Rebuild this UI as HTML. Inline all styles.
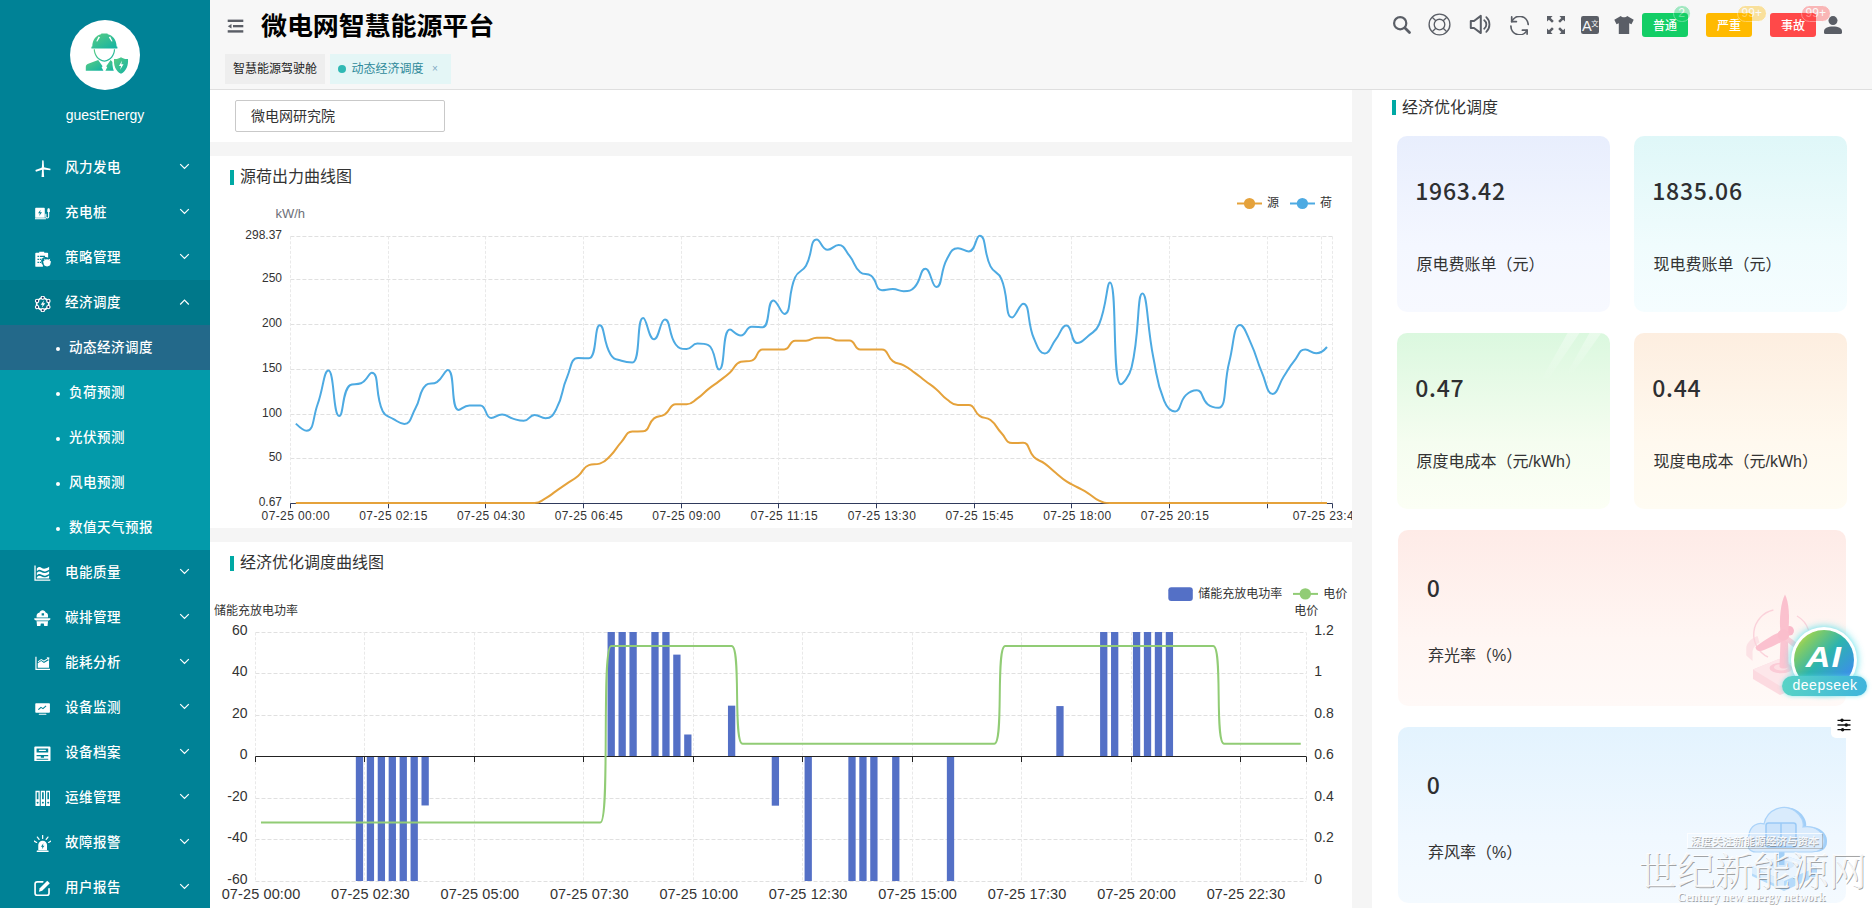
<!DOCTYPE html>
<html lang="zh-CN">
<head>
<meta charset="utf-8">
<title>微电网智慧能源平台</title>
<style>
html,body{margin:0;padding:0;}
body{width:1872px;height:908px;overflow:hidden;background:#f5f5f5;font-family:"Liberation Sans","Noto Sans CJK SC",sans-serif;color:#333;}
#app{position:relative;width:1872px;height:908px;overflow:hidden;}
.abs{position:absolute;}
svg{display:block;}
/* sidebar */
.sidebar{position:absolute;left:0;top:0;width:210px;height:908px;background:#008296;color:#fff;}
.avatar{position:absolute;left:70px;top:20px;width:70px;height:70px;border-radius:50%;background:#fff;}
.uname{position:absolute;left:0;width:210px;top:107px;text-align:center;font-size:14px;line-height:16px;color:#fff;}
.mi{position:absolute;left:0;width:210px;height:45px;line-height:45px;font-size:13.5px;letter-spacing:.5px;font-weight:500;color:#fff;}
.mi .ic{position:absolute;left:34px;top:14px;width:17px;height:17px;}
.mi .tx{position:absolute;left:65px;top:.2px;white-space:nowrap;}
.mi .ar{position:absolute;left:179px;top:16px;width:11px;height:11px;}
.mi.open{background:#00788a;}
.sub{position:absolute;left:0;width:210px;height:45px;line-height:45px;font-size:13.5px;letter-spacing:.5px;font-weight:500;color:#fff;background:#039aaa;}
.sub.act{background:#23698a;}
.sub .dot{position:absolute;left:56px;top:21.5px;width:4px;height:4px;border-radius:50%;background:#fff;}
.sub .tx{position:absolute;left:69px;top:.2px;white-space:nowrap;}
/* header */
.header{position:absolute;left:210px;top:0;width:1662px;height:89px;background:#f7f7f7;border-bottom:1px solid #dfdfdf;}
.title{position:absolute;left:51px;top:8px;font-size:26px;line-height:36px;font-weight:bold;color:#000;white-space:nowrap;letter-spacing:-0.1px;transform:scaleY(.965);transform-origin:0 31px;}
.tab{position:absolute;top:54px;height:30px;line-height:30px;font-size:12px;white-space:nowrap;}
.tab1{left:15px;width:100px;background:#eeeeee;color:#1f1f1f;}
.tab1 span{position:absolute;left:8px;}
.tab2{left:120px;width:121px;background:#e4f6f6;color:#2f8a9a;}
.tab2 .d{position:absolute;left:8px;top:11px;width:8px;height:8px;border-radius:50%;background:#2fb9b4;}
.tab2 .t{position:absolute;left:21.5px;}
.tab2 .x{position:absolute;left:102px;top:0;font-size:10px;color:#7fa9c2;}
.hic{position:absolute;}
.btn{position:absolute;top:13px;width:46px;height:24px;line-height:24px;border-radius:3px;color:#fff;font-size:12px;text-align:center;font-weight:500;font-family:"Noto Sans CJK SC",sans-serif;}
.bdg{position:absolute;top:4.5px;height:15px;line-height:15px;border-radius:9px;border:1px solid #fff;color:#fff;font-size:12px;text-align:center;opacity:.37;}
/* cards */
.filter-card{position:absolute;left:210px;top:90px;width:1142px;height:52px;background:#fff;}
.inp{position:absolute;left:25px;top:10px;width:208px;height:30px;border:1px solid #c9c9c9;border-radius:2px;line-height:30px;font-size:14px;color:#333;padding-left:0;text-indent:15px;background:#fff;}
.card{position:absolute;left:210px;width:1142px;background:#fff;overflow:hidden;}
.ct{position:absolute;font-size:16px;line-height:20px;color:#333;white-space:nowrap;}
.ct:before{content:"";position:absolute;left:-10px;top:2.5px;width:4px;height:15px;background:#00a9a4;}
.right{position:absolute;left:1372px;top:90px;width:500px;height:818px;background:#fff;overflow:hidden;}
.st{position:absolute;border-radius:10px;overflow:hidden;}
.st .num{position:absolute;font-family:"Noto Sans CJK SC","Liberation Sans",sans-serif;font-weight:500;font-size:23px;letter-spacing:.7px;line-height:30px;color:#2e2f31;white-space:nowrap;}
.st .lab{position:absolute;font-size:16px;line-height:22px;color:#333;white-space:nowrap;}

</style>
</head>
<body>
<div id="app">
<div class="sidebar">
<div class="avatar"><svg viewBox="0 0 70 70" width="70" height="70"><defs><linearGradient id="avg" x1="0" y1="0" x2="1" y2="1"><stop offset="0" stop-color="#5bcd83"/><stop offset="1" stop-color="#12b2a4"/></linearGradient></defs>
<g fill="url(#avg)">
<path d="M22.300 26.600 C22.300 19.500 26.500 15.200 31 14.300 L31.400 13.400 H37.400 L37.800 14.300 C42.300 15.200 46.600 19.500 46.600 26.600 L47.400 26.800 V28.500 H21.400 V26.800Z M28.600 16.600 L26.300 21.200 L27.300 21.600 L30 17.200Z M40.200 16.600 L42.500 21.200 L41.500 21.600 L38.800 17.200Z" fill-rule="evenodd"/>
<path d="M23.700 29.300 H24.900 C25 34.500 28.300 39.600 34.400 40.600 C40.500 39.600 43.800 34.500 43.900 29.300 H45.100 C45 35.300 41.200 40.800 34.400 41.800 C27.600 40.800 23.800 35.300 23.700 29.300Z"/>
<path d="M28.200 40.100 L32.600 46.300 L31.600 47.300 L33.400 50.800 H15.800 V47 C15.800 45.300 16.700 44.300 18.200 43.800Z"/>
<path d="M40.600 40.100 L36.200 46.300 L37.200 47.300 L35.400 50.800 H43.800 C42.700 48 42.400 45 42.800 42.200Z"/>
<path d="M32.900 48.300 H35.900 V49.300 H32.900Z" fill="#fff"/>
<path d="M51 37.200 C53.300 38.800 55.500 39.200 58 38.900 C58.500 45 56.400 51 51 53.700 C45.600 51 43.500 45 44 38.900 C46.500 39.200 48.700 38.800 51 37.200Z M52 40.700 L49 46 H51 L50.200 49.800 L53.500 44.300 H51.300Z" fill-rule="evenodd"/>
</g>
<path d="M43.300 37.800 C42.300 43 43.300 48.500 46.600 52.300" fill="none" stroke="#fff" stroke-width="0.900"/>
</svg></div>
<div class="uname">guestEnergy</div>
<div class="mi" style="top:145px"><div class="ic" style="left:34.5px;top:14.6px;width:16px;height:17.2px"><svg viewBox="0 0 17 17" width="16" height="17.2" preserveAspectRatio="none"><g fill="#fff"><path d="M7.700 0.200 L9.100 0.500 L9.600 7.200 L7.300 7.300Z"/><path d="M9.300 7.100 L16.500 8.600 L16.300 10.200 L8.900 9.300Z"/><path d="M7.800 7.300 L0.400 10 L1.000 11.500 L8.400 9.300Z"/><path d="M7.500 9.200 L9.200 9.200 L9.700 17 L7.000 17Z"/><circle cx="8.400" cy="8.200" r="1.500"/></g></svg></div><div class="tx">风力发电</div><div class="ar"><svg viewBox="0 0 11 11" width="11" height="11"><path d="M1.200 3.200 L5.500 7.500 L9.800 3.200" fill="none" stroke="#fff" stroke-width="1.200"/></svg></div></div>
<div class="mi" style="top:190px"><div class="ic" style="left:34.5px;top:16.2px;width:16px;height:14.2px"><svg viewBox="0 0 17 17" width="16" height="14.2" preserveAspectRatio="none"><g fill="#fff"><path d="M1 2.2 h8.6 a0.8 0.8 0 0 1 .8 .8 v11 h-10.2 v-11 a.8 .8 0 0 1 .8 -.8z M5.9 4.4 L3.3 8.7 h1.9 l-.7 3.3 2.9 -4.5 h-2z" fill-rule="evenodd"/><rect x="0" y="14.6" width="11.6" height="1.3"/><path d="M11 9.2 h1.1 v3.6 a.9 .9 0 0 0 1.8 0 V7.2 h-.8 V4.6 l.6 -1.9 h1.5 l.6 1.9 v2.6 h-.7 v5.6 a2.1 2.1 0 0 1 -4.200 0z"/></g></svg></div><div class="tx">充电桩</div><div class="ar"><svg viewBox="0 0 11 11" width="11" height="11"><path d="M1.200 3.200 L5.500 7.500 L9.800 3.200" fill="none" stroke="#fff" stroke-width="1.200"/></svg></div></div>
<div class="mi" style="top:235px"><div class="ic" style="left:34.5px;top:15.7px;width:16.3px;height:16.5px"><svg viewBox="0 0 17 17" width="16.3" height="16.5" preserveAspectRatio="none"><g fill="#fff"><path d="M1.2 1.8 h3.2 v-.9 h5.200 v.9 h3.2 a.9 .9 0 0 1 .9 .9 v4.300 a4.600 4.600 0 0 0 -5.500 7.4 v1.9 h-7.0 a.9 .9 0 0 1 -.9 -.9 v-12.7 a.9 .9 0 0 1 .9 -.9z M2.6 5 v1.3 h1.5 v-1.3z M5 5 v1.3 h5.500 v-1.300z M2.600 8 v1.3 h1.5 v-1.3z M5 8 v1.300 h2.400 v-1.3z M2.600 11 v1.3 h1.500 v-1.300z M5 11 v1.3 h2 v-1.300z" fill-rule="evenodd"/><circle cx="12.600" cy="12.200" r="3.700"/><path d="M9.600 8.300 l1.500 1.400 M15.700 8.300 l-1.500 1.400 M8.300 11.200 h1.500 M16.900 11.200 h-1.500" stroke="#fff" stroke-width="1" fill="none"/></g></svg></div><div class="tx">策略管理</div><div class="ar"><svg viewBox="0 0 11 11" width="11" height="11"><path d="M1.200 3.200 L5.500 7.500 L9.800 3.200" fill="none" stroke="#fff" stroke-width="1.200"/></svg></div></div>
<div class="mi open" style="top:280px"><div class="ic" style="left:34px;top:15.5px;width:17.5px;height:16px"><svg viewBox="0 0 18 17" width="17.5" height="16" preserveAspectRatio="none"><g><circle cx="9" cy="8.500" r="6.300" fill="none" stroke="#fff" stroke-width="1.800"/><g fill="#1f2a5a" stroke="#fff" stroke-width="1.200"><circle cx="9" cy="1.900" r="1.700"/><circle cx="9" cy="15.100" r="1.700"/><circle cx="3.200" cy="5.200" r="1.700"/><circle cx="14.800" cy="5.200" r="1.700"/><circle cx="3.200" cy="11.800" r="1.700"/><circle cx="14.800" cy="11.800" r="1.700"/></g><path d="M10.300 4.600 L6.900 9.200 h2 l-.9 3.400 3.600 -4.800 h-2.100z" fill="#fff"/></g></svg></div><div class="tx">经济调度</div><div class="ar" style="top:17.3px"><svg viewBox="0 0 11 11" width="11" height="11"><path d="M1.200 7.500 L5.500 3.200 L9.800 7.500" fill="none" stroke="#fff" stroke-width="1.200"/></svg></div></div>
<div class="sub act" style="top:325px"><div class="dot"></div><div class="tx">动态经济调度</div></div>
<div class="sub" style="top:370px"><div class="dot"></div><div class="tx">负荷预测</div></div>
<div class="sub" style="top:415px"><div class="dot"></div><div class="tx">光伏预测</div></div>
<div class="sub" style="top:460px"><div class="dot"></div><div class="tx">风电预测</div></div>
<div class="sub" style="top:505px"><div class="dot"></div><div class="tx">数值天气预报</div></div>
<div class="mi" style="top:550px"><div class="ic" style="left:34.2px;top:15px;width:16.6px;height:16.3px"><svg viewBox="0 0 17 17" width="16.6" height="16.3" preserveAspectRatio="none"><g fill="#fff"><path d="M0.400 0.500 h1.300 v14.700 h15 v1.300 h-16.300z"/><path d="M2.900 3.600 c2 -2 3.500 -1.600 5 -.6 s3.500 1.500 7.600 -1.200 v3.100 c-4 2.600 -6 1.900 -7.600 .9 s-3 -1.300 -5 .6z"/><path d="M2.900 8.200 c2 -2 3.500 -1.600 5 -.6 s3.500 1.500 7.600 -1.200 v3 c-4 2.600 -6 1.900 -7.600 .9 s-3 -1.300 -5 .6z"/><path d="M2.900 12.700 c2 -2 3.500 -1.600 5 -.6 s3.500 1.500 7.600 -1.200 v3.300 h-12.600z"/></g></svg></div><div class="tx">电能质量</div><div class="ar"><svg viewBox="0 0 11 11" width="11" height="11"><path d="M1.200 3.200 L5.500 7.500 L9.800 3.200" fill="none" stroke="#fff" stroke-width="1.200"/></svg></div></div>
<div class="mi" style="top:595px"><div class="ic" style="left:34.2px;top:14.9px;width:16.6px;height:16.6px"><svg viewBox="0 0 18 17" width="16.6" height="16.6" preserveAspectRatio="none"><g fill="#fff"><path d="M2.800 7.600 v-1.600 c0 -1.800 1.200 -3 3 -3.200 c.6 -1.700 2 -2.600 3.700 -2.500 c1.500 .1 2.600 .9 3.100 2.300 c1.700 .3 2.600 1.500 2.600 3.400 v1.600z M8.300 3.300 v2.300 h2.600 v-2.300z" fill-rule="evenodd"/><path d="M0.300 8.400 h17.400 v1.300 l-1.900 1 h-13.600 l-1.900 -1z"/><path d="M2.800 11.500 h12.400 l-.5 4.900 h-3.600 l-.5 -2.600 h-3.200 l-.5 2.600 h-3.600z"/></g></svg></div><div class="tx">碳排管理</div><div class="ar"><svg viewBox="0 0 11 11" width="11" height="11"><path d="M1.200 3.200 L5.500 7.500 L9.800 3.200" fill="none" stroke="#fff" stroke-width="1.200"/></svg></div></div>
<div class="mi" style="top:640px"><div class="ic" style="left:34.6px;top:16.3px;width:15.5px;height:14.4px"><svg viewBox="0 0 17 17" width="15.5" height="14.4" preserveAspectRatio="none"><g fill="#fff"><path d="M0.400 0.800 h1.300 v14.400 h15 v1.300 h-16.300z"/><path d="M3 13.800 v-5.200 l3.800 -2.600 3 2.200 5.600 -3.600 v9.200z"/><path d="M3 6.400 l3.800 -3 3 2 4 -2.800 -.9 -.1 .2 -1 2.700 .4 -.4 2.700 -1 -.2 .1 -.9 -4.700 3.300 -3 -2 -3.200 2.600z"/></g></svg></div><div class="tx">能耗分析</div><div class="ar"><svg viewBox="0 0 11 11" width="11" height="11"><path d="M1.200 3.200 L5.500 7.500 L9.800 3.200" fill="none" stroke="#fff" stroke-width="1.200"/></svg></div></div>
<div class="mi" style="top:685px"><div class="ic" style="left:35.2px;top:16.5px;width:15.2px;height:14px"><svg viewBox="0 0 17 17" width="15.2" height="14" preserveAspectRatio="none"><g fill="#fff"><path d="M1.200 1.600 h14.600 a.9 .9 0 0 1 .9 .9 v9.600 a.9 .9 0 0 1 -.9 .9 h-14.600 a.9 .9 0 0 1 -.9 -.9 v-9.600 a.9 .9 0 0 1 .9 -.9z M4.200 9.600 l2.600 -2.400 2.200 1.500 3.800 -3.400 -.8 -.9 -3.200 2.800 -2.200 -1.500 -3.300 3z" fill-rule="evenodd"/><rect x="4.200" y="14.300" width="8.600" height="1.300" rx=".5"/></g></svg></div><div class="tx">设备监测</div><div class="ar"><svg viewBox="0 0 11 11" width="11" height="11"><path d="M1.200 3.200 L5.500 7.500 L9.800 3.200" fill="none" stroke="#fff" stroke-width="1.200"/></svg></div></div>
<div class="mi" style="top:730px"><div class="ic" style="left:34.2px;top:15.5px;width:16.8px;height:15.8px"><svg viewBox="0 0 17 17" width="16.8" height="15.8" preserveAspectRatio="none"><g fill="#fff"><path d="M1.200 0.600 h14.600 a.9 .9 0 0 1 .9 .9 v14 a.9 .9 0 0 1 -.9 .9 h-14.600 a.9 .9 0 0 1 -.9 -.9 v-14 a.9 .9 0 0 1 .9 -.9z M2.600 2.600 v4.300 h11.800 v-4.300z M2.600 9.700 v1.300 h4.300 v1.600 h3.200 v-1.600 h4.300 v-1.300z M2.600 13.600 v1.200 h11.800 v-1.200z" fill-rule="evenodd"/><rect x="4.800" y="4" width="7.400" height="1.400" rx=".7"/></g></svg></div><div class="tx">设备档案</div><div class="ar"><svg viewBox="0 0 11 11" width="11" height="11"><path d="M1.200 3.200 L5.500 7.500 L9.800 3.200" fill="none" stroke="#fff" stroke-width="1.200"/></svg></div></div>
<div class="mi" style="top:775px"><div class="ic" style="left:34.6px;top:15px;width:15.8px;height:16.5px"><svg viewBox="0 0 17 17" width="15.8" height="16.5" preserveAspectRatio="none"><g fill="#fff" fill-rule="evenodd"><path d="M0.500 0.800 h4.600 v15.600 h-4.600z M1.900 2.400 v7.200 h1.800 v-7.200z M2.800 12 a1 1 0 1 0 .01 0z"/><path d="M6.200 0.800 h4.600 v15.600 h-4.600z M7.600 2.400 v7.200 h1.800 v-7.200z M8.500 12 a1 1 0 1 0 .01 0z"/><path d="M11.900 0.800 h4.600 v15.600 h-4.600z M13.300 2.400 v7.200 h1.800 v-7.200z M14.200 12 a1 1 0 1 0 .01 0z"/></g></svg></div><div class="tx">运维管理</div><div class="ar"><svg viewBox="0 0 11 11" width="11" height="11"><path d="M1.200 3.200 L5.500 7.500 L9.800 3.200" fill="none" stroke="#fff" stroke-width="1.200"/></svg></div></div>
<div class="mi" style="top:820px"><div class="ic" style="left:34px;top:15px;width:17.3px;height:17.3px"><svg viewBox="0 0 17 17" width="17.3" height="17.3" preserveAspectRatio="none"><g fill="#fff"><path d="M8.500 5.600 a4.300 4.300 0 0 1 4.300 4.300 v5 h-8.600 v-5 a4.300 4.300 0 0 1 4.300 -4.300z M9.300 8.200 l-2.500 3.400 h1.500 l-.6 2.400 2.600 -3.500 h-1.600z" fill-rule="evenodd"/><rect x="2.600" y="15.300" width="11.800" height="1.300" rx=".4"/><path d="M8.500 0.400 v3 M3.300 2 l1.700 2.400 M13.700 2 l-1.700 2.400 M0.300 6 l2.300 1.300 M16.700 6 l-2.300 1.300" stroke="#fff" stroke-width="1.200" stroke-linecap="round" fill="none"/></g></svg></div><div class="tx">故障报警</div><div class="ar"><svg viewBox="0 0 11 11" width="11" height="11"><path d="M1.200 3.200 L5.500 7.500 L9.800 3.200" fill="none" stroke="#fff" stroke-width="1.200"/></svg></div></div>
<div class="mi" style="top:865px"><div class="ic" style="left:34.2px;top:14.8px;width:16.6px;height:16.5px"><svg viewBox="0 0 17 17" width="16.6" height="16.5" preserveAspectRatio="none"><g fill="none" stroke="#fff" stroke-width="1.700" stroke-linecap="round" stroke-linejoin="round"><path d="M15.400 9 v4.600 a2.300 2.300 0 0 1 -2.300 2.300 h-9.700 a2.300 2.300 0 0 1 -2.300 -2.300 v-9.400 a2.300 2.300 0 0 1 2.300 -2.300 h5.600"/></g><path d="M13.600 0.700 l2.600 2.600 -7.800 7.800 -3.400 .9 .9 -3.500z" fill="#fff"/></svg></div><div class="tx">用户报告</div><div class="ar"><svg viewBox="0 0 11 11" width="11" height="11"><path d="M1.200 3.200 L5.500 7.500 L9.800 3.200" fill="none" stroke="#fff" stroke-width="1.200"/></svg></div></div>
</div>
<div class="header">
<div class="hic" style="left:17px;top:19px;width:17px;height:15px"><svg viewBox="0 0 17 15" width="17" height="15"><g fill="#5a5e66"><rect x="0.700" y="0.600" width="15.600" height="2.400"/><rect x="6" y="6" width="10.300" height="2.300"/><rect x="0.700" y="11.200" width="15.600" height="2.400"/><path d="M0.800 7.200 L4.500 5 V9.400Z"/></g></svg></div>
<div class="title">微电网智慧能源平台</div>
<div class="tab tab1"><span>智慧能源驾驶舱</span></div>
<div class="tab tab2"><div class="d"></div><span class="t">动态经济调度</span><span class="x">×</span></div>
<div class="hic" style="left:1182px;top:15px;width:20px;height:20px"><svg viewBox="0 0 20 20" width="20" height="20"><circle cx="8.200" cy="8.200" r="6.100" fill="none" stroke="#5a5e66" stroke-width="2.200"/><path d="M13 13 L17.500 17.500" stroke="#5a5e66" stroke-width="2.800" stroke-linecap="round"/></svg></div>
<div class="hic" style="left:1218px;top:13px;width:23px;height:23px"><svg viewBox="0 0 23 23" width="23" height="23"><g fill="none" stroke="#5a5e66" stroke-width="1.350"><circle cx="11.500" cy="11.500" r="10.400"/><circle cx="11.500" cy="11.500" r="5.300"/><path d="M4.200 4.200 L7.800 7.800 M18.800 4.200 L15.200 7.800 M4.200 18.800 L7.800 15.200 M18.800 18.800 L15.200 15.200"/></g></svg></div>
<div class="hic" style="left:1259px;top:14px;width:23px;height:21px"><svg viewBox="0 0 23 21" width="23" height="21"><g fill="none" stroke="#5a5e66" stroke-width="2" stroke-linejoin="round" stroke-linecap="round"><path d="M1.800 7 h3.200 l6.800 -5.100 v17.200 l-6.800 -5.100 h-3.200z"/><path d="M15.200 6.300 a5.200 5.200 0 0 1 0 8.400" stroke-width="1.800"/><path d="M17.300 3.200 a10 10 0 0 1 0 14.600" stroke-width="1.800"/></g></svg></div>
<div class="hic" style="left:1299.5px;top:15.5px;width:19px;height:19px"><svg viewBox="0 0 19 19" width="19" height="19"><g fill="none" stroke="#5a5e66" stroke-width="1.700" stroke-linecap="round" stroke-linejoin="round"><path d="M18.200 8.500 A8.600 8.600 0 0 0 1.700 5.600"/><path d="M0.900 10 A8.600 8.600 0 0 0 17.100 14.200"/><path d="M1.700 0.900 V5.600 H6.400"/><path d="M12.400 14.200 H17.100 V18.100"/></g></svg></div>
<div class="hic" style="left:1337px;top:16px;width:18px;height:18px"><svg viewBox="0 0 18 18" width="18" height="18"><g fill="#5a5e66"><path d="M0 0 h5.600 l-1.900 1.900 3.100 3.100 -1.800 1.800 -3.100 -3.100 -1.900 1.900z"/><path d="M18 0 v5.600 l-1.900 -1.900 -3.100 3.100 -1.800 -1.800 3.100 -3.100 -1.900 -1.900z"/><path d="M0 18 v-5.600 l1.900 1.900 3.100 -3.100 1.800 1.800 -3.100 3.100 1.900 1.900z"/><path d="M18 18 h-5.600 l1.900 -1.900 -3.100 -3.100 1.800 -1.800 3.100 3.100 1.900 -1.900z"/></g></svg></div>
<div class="hic" style="left:1371px;top:16px;width:18px;height:18px"><svg viewBox="0 0 18 18" width="18" height="18"><rect x="0" y="0" width="18" height="18" rx="2.200" fill="#5a5e66"/><text x="0.900" y="14.900" font-family="Liberation Sans,sans-serif" font-size="14.600" fill="#f7f7f7">A</text><text x="10.200" y="10" font-family="Liberation Sans,Noto Sans CJK SC,sans-serif" font-size="7.200" fill="#f7f7f7">文</text></svg></div>
<div class="hic" style="left:1404px;top:16px;width:20px;height:18px"><svg viewBox="0 0 20 18" width="20" height="18"><path d="M6.800 0 c1 1.700 5.400 1.700 6.400 0 l6.500 3.700 -2.200 4.600 -2.300 -1 v10.700 h-10.400 v-10.700 l-2.300 1 -2.200 -4.600z" fill="#5a5e66"/></svg></div>
<div class="btn" style="left:1432px;background:#13ce66">普通</div>
<div class="btn" style="left:1496px;background:#ffba00">严重</div>
<div class="btn" style="left:1560px;background:#ff4949">事故</div>
<div class="bdg" style="left:1462.5px;width:16px;background:#13ce66">2</div>
<div class="bdg" style="left:1526.5px;width:28.5px;background:#ffba00">99+</div>
<div class="bdg" style="left:1590.5px;width:28.5px;background:#ff4949">99+</div>
<div class="hic" style="left:1614px;top:16px;width:18px;height:18px"><svg viewBox="0 0 18 18" width="18" height="18"><g fill="#5a5e66"><circle cx="9" cy="4.600" r="4.500"/><path d="M1.600 18 a1.600 1.600 0 0 1 -1.600 -1.600 v-.9 c0 -3.300 3.500 -5 9 -5 s9 1.700 9 5 v.9 a1.600 1.600 0 0 1 -1.600 1.600z"/></g></svg></div>
</div>
<div class="filter-card"><div class="inp">微电网研究院</div></div>
<div class="card" style="top:156px;height:372px">
<div class="ct" style="left:30px;top:11px">源荷出力曲线图</div>
<svg class="abs" style="left:0;top:0" width="1142" height="372" viewBox="210 156 1142 372" font-family="Liberation Sans,Noto Sans CJK SC,sans-serif" font-size="12">
<g stroke="#e0e0e0" stroke-width="1" stroke-dasharray="4 2" fill="none">
<path d="M290.40 236.5H1332.43"/>
<path d="M290.40 279.5H1332.43"/>
<path d="M290.40 324.5H1332.43"/>
<path d="M290.40 369.5H1332.43"/>
<path d="M290.40 414.5H1332.43"/>
<path d="M290.40 458.5H1332.43"/>
</g>
<g stroke="#e9e9e9" stroke-width="1" stroke-dasharray="3 1.800" fill="none">
<path d="M290.5 236.5V503.5"/>
<path d="M388.5 236.5V503.5"/>
<path d="M485.5 236.5V503.5"/>
<path d="M583.5 236.5V503.5"/>
<path d="M681.5 236.5V503.5"/>
<path d="M778.5 236.5V503.5"/>
<path d="M876.5 236.5V503.5"/>
<path d="M974.5 236.5V503.5"/>
<path d="M1071.5 236.5V503.5"/>
<path d="M1169.5 236.5V503.5"/>
<path d="M1267.5 236.5V503.5"/>
<path d="M1321.5 236.5V503.5"/>
<path d="M1332.5 236.5V503.5"/>
</g>
<g stroke="#2f3a5c" stroke-width="1" fill="none">
<path d="M290.40 503.5H1332.43"/>
<path d="M290.5 503.5V508.300"/>
<path d="M388.5 503.5V508.300"/>
<path d="M485.5 503.5V508.300"/>
<path d="M583.5 503.5V508.300"/>
<path d="M681.5 503.5V508.300"/>
<path d="M778.5 503.5V508.300"/>
<path d="M876.5 503.5V508.300"/>
<path d="M974.5 503.5V508.300"/>
<path d="M1071.5 503.5V508.300"/>
<path d="M1169.5 503.5V508.300"/>
<path d="M1267.5 503.5V508.300"/>
<path d="M1332.5 503.5V508.300"/>
</g>
<g fill="#333" text-anchor="end">
<text x="282" y="238.8">298.37</text>
<text x="282" y="281.8">250</text>
<text x="282" y="326.8">200</text>
<text x="282" y="371.8">150</text>
<text x="282" y="416.8">100</text>
<text x="282" y="460.8">50</text>
<text x="282" y="505.8">0.67</text>
</g>
<text x="290.300" y="218.400" fill="#6e7079" text-anchor="middle" font-size="13">kW/h</text>
<g fill="#333" text-anchor="middle" letter-spacing="0.400">
<text x="295.8" y="520">07-25 00:00</text>
<text x="393.5" y="520">07-25 02:15</text>
<text x="491.2" y="520">07-25 04:30</text>
<text x="588.9" y="520">07-25 06:45</text>
<text x="686.6" y="520">07-25 09:00</text>
<text x="784.3" y="520">07-25 11:15</text>
<text x="882.0" y="520">07-25 13:30</text>
<text x="979.7" y="520">07-25 15:45</text>
<text x="1077.4" y="520">07-25 18:00</text>
<text x="1175.0" y="520">07-25 20:15</text>
<text x="1327.0" y="520">07-25 23:45</text>
</g>
<path d="M295.83,503.00C295.83,503.00 301.25,503.00 306.68,503.00C312.11,503.00 312.11,503.00 317.54,503.00C322.96,503.00 322.96,503.00 328.39,503.00C333.82,503.00 333.82,503.00 339.25,503.00C344.67,503.00 344.67,503.00 350.10,503.00C355.53,503.00 355.53,503.00 360.95,503.00C366.38,503.00 366.38,503.00 371.81,503.00C377.24,503.00 377.24,503.00 382.66,503.00C388.09,503.00 388.09,503.00 393.52,503.00C398.94,503.00 398.95,503.00 404.37,503.00C409.80,503.00 409.80,503.00 415.23,503.00C420.65,503.00 420.65,503.00 426.08,503.00C431.51,503.00 431.51,503.00 436.94,503.00C442.36,503.00 442.36,503.00 447.79,503.00C453.22,503.00 453.22,503.00 458.64,503.00C464.07,503.00 464.07,503.00 469.50,503.00C474.93,503.00 474.93,503.00 480.35,503.00C485.78,503.00 485.78,503.00 491.21,503.00C496.64,503.00 496.64,503.00 502.06,503.00C507.49,503.00 507.49,503.00 512.92,503.00C518.34,503.00 518.34,503.00 523.77,503.00C529.20,503.00 529.42,503.00 534.63,503.00C540.28,503.00 540.36,501.25 545.48,498.40C551.21,495.20 550.91,494.65 556.34,490.90C561.76,487.15 561.74,487.12 567.19,483.40C572.59,479.72 573.07,480.29 578.04,476.10C583.92,471.14 582.55,467.22 588.90,465.10C593.40,463.60 594.90,465.10 599.75,463.60C605.75,461.75 605.87,460.26 610.61,455.50C616.72,449.36 615.61,448.27 621.46,441.80C626.47,436.27 626.03,431.78 632.32,431.50C636.88,431.30 638.92,431.50 643.17,431.30C649.77,430.99 647.60,423.43 654.03,418.40C658.45,414.93 660.11,417.42 664.88,414.30C670.97,410.32 669.47,404.20 675.73,404.20C680.32,404.20 681.50,404.20 686.59,404.20C692.36,404.20 692.42,401.89 697.44,398.40C703.28,394.34 702.71,393.55 708.30,389.10C713.57,384.90 713.81,385.21 719.15,381.10C724.66,376.86 724.83,377.03 730.01,372.40C735.68,367.33 734.54,363.24 740.86,361.70C745.39,360.60 747.25,361.70 751.72,360.60C758.10,359.03 756.17,349.40 762.57,349.40C767.02,349.40 768.00,349.40 773.43,349.40C778.85,349.40 779.53,349.40 784.28,349.40C790.38,349.40 789.03,340.65 795.13,340.65C799.89,340.65 800.66,340.65 805.99,340.65C811.51,340.65 811.32,337.70 816.84,337.70C822.17,337.70 822.36,337.70 827.70,337.70C833.22,337.70 833.03,340.60 838.55,340.60C843.89,340.60 844.67,340.60 849.41,340.60C855.53,340.60 854.14,349.50 860.26,349.50C864.99,349.50 865.69,349.50 871.12,349.50C876.54,349.50 877.56,349.50 881.97,349.50C888.42,349.50 886.56,356.53 892.82,361.10C897.42,364.45 898.56,362.64 903.68,365.35C909.41,368.39 909.24,368.79 914.53,372.60C920.10,376.61 919.94,376.83 925.39,381.00C930.79,385.13 931.07,384.80 936.24,389.20C941.93,394.05 941.11,395.14 947.10,399.50C951.97,403.04 952.21,405.00 957.95,405.00C963.07,405.00 964.32,405.00 968.81,405.00C975.17,405.00 973.48,411.61 979.66,415.90C984.33,419.14 986.09,416.57 990.52,420.05C996.95,425.12 995.58,426.87 1001.37,433.00C1006.43,438.35 1005.97,443.00 1012.22,443.00C1016.82,443.00 1018.98,442.80 1023.08,442.80C1029.83,442.80 1027.59,450.92 1033.93,457.00C1038.44,461.32 1039.66,459.89 1044.79,463.60C1050.51,467.74 1050.17,468.21 1055.64,472.70C1061.02,477.11 1060.74,477.54 1066.50,481.40C1071.60,484.82 1071.95,484.29 1077.35,487.25C1082.80,490.24 1082.92,490.05 1088.21,493.30C1093.77,496.72 1093.19,497.98 1099.06,500.60C1104.05,502.83 1104.42,503.00 1109.91,503.00C1115.28,503.00 1115.34,503.00 1120.77,503.00C1126.20,503.00 1126.20,503.00 1131.62,503.00C1137.05,503.00 1137.05,503.00 1142.48,503.00C1147.91,503.00 1147.91,503.00 1153.33,503.00C1158.76,503.00 1158.76,503.00 1164.19,503.00C1169.61,503.00 1169.61,503.00 1175.04,503.00C1180.47,503.00 1180.47,503.00 1185.90,503.00C1191.32,503.00 1191.32,503.00 1196.75,503.00C1202.18,503.00 1202.18,503.00 1207.61,503.00C1213.03,503.00 1213.03,503.00 1218.46,503.00C1223.89,503.00 1223.89,503.00 1229.31,503.00C1234.74,503.00 1234.74,503.00 1240.17,503.00C1245.60,503.00 1245.60,503.00 1251.02,503.00C1256.45,503.00 1256.45,503.00 1261.88,503.00C1267.31,503.00 1267.31,503.00 1272.73,503.00C1278.16,503.00 1278.16,503.00 1283.59,503.00C1289.01,503.00 1289.01,503.00 1294.44,503.00C1299.87,503.00 1299.87,503.00 1305.30,503.00C1310.72,503.00 1310.72,503.00 1316.15,503.00C1321.58,503.00 1327.00,503.00 1327.00,503.00" fill="none" stroke="#e5a23b" stroke-width="2" stroke-linejoin="bevel"/>
<path d="M295.83,423.60C295.83,423.60 303.27,430.80 306.68,430.80C314.13,430.80 312.71,417.87 317.54,404.50C323.57,387.77 323.69,370.60 328.39,370.60C334.55,370.60 332.87,416.00 339.25,416.00C343.72,416.00 341.97,390.46 350.10,385.10C352.83,383.30 356.39,385.10 360.95,383.30C367.25,380.82 368.82,372.70 371.81,372.70C379.68,372.70 374.54,393.83 382.66,411.20C385.39,417.03 387.76,415.73 393.52,419.10C398.61,422.08 400.14,423.90 404.37,423.90C411.00,423.90 410.71,416.88 415.23,408.80C421.56,397.48 418.50,392.04 426.08,385.10C429.36,382.10 432.49,385.10 436.94,382.10C443.35,377.77 444.73,370.00 447.79,370.00C455.59,370.00 450.19,410.00 458.64,410.00C461.05,410.00 463.85,405.40 469.50,405.40C474.70,405.40 476.07,405.40 480.35,405.40C486.92,405.40 484.76,418.00 491.21,418.00C495.62,418.00 496.68,414.60 502.06,414.60C507.54,414.60 507.37,417.02 512.92,418.60C518.23,420.12 518.63,420.80 523.77,420.80C529.48,420.80 528.97,415.00 534.63,415.00C539.83,415.00 540.68,418.20 545.48,418.20C551.54,418.20 553.11,415.04 556.34,408.90C563.97,394.34 560.57,392.31 567.19,376.80C571.43,366.86 570.81,358.00 578.04,358.00C581.66,358.00 586.31,358.30 588.90,358.30C597.17,358.30 594.03,325.30 599.75,325.30C604.89,325.30 602.87,341.85 610.61,354.50C613.72,359.60 615.67,358.86 621.46,360.80C626.53,362.50 630.22,362.50 632.32,362.50C641.07,362.50 636.04,317.90 643.17,317.90C646.90,317.90 648.43,339.30 654.03,339.30C659.29,339.30 659.96,319.50 664.88,319.50C670.82,319.50 668.15,334.19 675.73,344.50C679.00,348.94 681.25,349.00 686.59,349.00C692.10,349.00 691.74,343.60 697.44,343.60C702.60,343.60 705.13,343.60 708.30,345.10C715.99,348.74 714.90,369.40 719.15,369.40C725.75,369.40 721.65,329.60 730.01,329.60C732.50,329.60 735.75,335.40 740.86,335.40C746.61,335.40 745.63,326.80 751.72,326.80C756.49,326.80 759.61,327.30 762.57,327.30C770.46,327.30 766.63,300.50 773.43,300.50C777.48,300.50 780.90,313.90 784.28,313.90C791.76,313.90 787.47,294.32 795.13,277.30C798.32,270.22 802.09,272.49 805.99,265.70C812.95,253.59 809.73,239.50 816.84,239.50C820.59,239.50 821.64,249.75 827.70,249.75C832.49,249.75 833.80,245.10 838.55,245.10C844.66,245.10 844.70,249.81 849.41,255.70C855.56,263.41 853.37,266.21 860.26,272.30C864.22,275.80 866.91,272.33 871.12,275.80C877.76,281.28 875.21,290.20 881.97,290.20C886.06,290.20 887.43,289.10 892.82,289.10C898.29,289.10 898.37,291.20 903.68,291.20C909.23,291.20 910.72,291.13 914.53,287.20C921.58,279.93 919.94,268.80 925.39,268.80C930.79,268.80 931.78,287.00 936.24,287.00C942.63,287.00 939.85,271.65 947.10,258.70C950.71,252.25 951.75,248.20 957.95,248.20C962.60,248.20 964.76,251.40 968.81,251.40C975.61,251.40 975.65,235.80 979.66,235.80C986.51,235.80 983.32,252.14 990.52,266.40C994.17,273.64 998.21,271.37 1001.37,278.80C1009.06,296.87 1004.67,317.40 1012.22,317.40C1015.52,317.40 1019.56,303.65 1023.08,303.65C1030.41,303.65 1026.72,321.97 1033.93,338.50C1037.58,346.85 1039.22,353.40 1044.79,353.40C1050.07,353.40 1050.28,346.60 1055.64,339.70C1061.13,332.65 1061.46,325.50 1066.50,325.50C1072.32,325.50 1070.68,343.10 1077.35,343.10C1081.54,343.10 1083.31,340.19 1088.21,336.00C1094.17,330.89 1096.16,331.65 1099.06,324.50C1107.01,304.90 1106.68,282.50 1109.91,282.50C1117.54,282.50 1111.70,384.20 1120.77,384.20C1122.55,384.20 1129.32,376.92 1131.62,367.30C1140.17,331.62 1136.67,293.60 1142.48,293.60C1147.53,293.60 1146.91,325.76 1153.33,357.50C1157.77,379.41 1156.07,380.75 1164.19,400.90C1166.93,407.70 1170.32,411.40 1175.04,411.40C1181.17,411.40 1179.15,401.69 1185.90,395.10C1190.00,391.09 1192.39,390.20 1196.75,390.20C1203.24,390.20 1201.01,398.85 1207.61,404.20C1211.86,407.65 1216.35,407.80 1218.46,407.80C1227.20,407.80 1223.30,384.60 1229.31,361.70C1234.16,343.25 1233.22,325.10 1240.17,325.10C1244.07,325.10 1246.56,333.89 1251.02,343.60C1257.41,357.49 1255.81,358.23 1261.88,372.30C1266.66,383.38 1266.83,393.90 1272.73,393.90C1277.68,393.90 1278.06,385.28 1283.59,376.80C1288.91,368.63 1288.40,368.20 1294.44,360.60C1299.25,354.55 1299.06,349.50 1305.30,349.50C1309.91,349.50 1310.96,353.30 1316.15,353.30C1321.81,353.30 1327.00,347.00 1327.00,347.00" fill="none" stroke="#4daae2" stroke-width="2" stroke-linejoin="bevel"/>
<g><path d="M1237 203.500H1262" stroke="#e5a23b" stroke-width="2"/><circle cx="1249.500" cy="203.500" r="5.600" fill="#e5a23b"/><text x="1267" y="207.300" fill="#333">源</text>
<path d="M1290 203.500H1315" stroke="#4daae2" stroke-width="2"/><circle cx="1302.400" cy="203.500" r="5.600" fill="#4daae2"/><text x="1320" y="207.300" fill="#333">荷</text></g>
</svg></div>
<div class="card" style="top:542px;height:366px">
<div class="ct" style="left:30px;top:11px">经济优化调度曲线图</div>
<svg class="abs" style="left:0;top:0" width="1142" height="366" viewBox="210 542 1142 366" font-family="Liberation Sans,Noto Sans CJK SC,sans-serif" font-size="14">
<g stroke="#e0e0e0" stroke-width="1" stroke-dasharray="4 2" fill="none">
<path d="M255.50 632.5H1306.22"/>
<path d="M255.50 673.5H1306.22"/>
<path d="M255.50 715.5H1306.22"/>
<path d="M255.50 798.5H1306.22"/>
<path d="M255.50 839.5H1306.22"/>
<path d="M255.50 881.5H1306.22"/>
</g>
<g stroke="#e9e9e9" stroke-width="1" stroke-dasharray="3 1.800" fill="none">
<path d="M255.5 632.5V881.5"/>
<path d="M364.5 632.5V881.5"/>
<path d="M474.5 632.5V881.5"/>
<path d="M583.5 632.5V881.5"/>
<path d="M693.5 632.5V881.5"/>
<path d="M802.5 632.5V881.5"/>
<path d="M912.5 632.5V881.5"/>
<path d="M1021.5 632.5V881.5"/>
<path d="M1131.5 632.5V881.5"/>
<path d="M1240.5 632.5V881.5"/>
<path d="M1306.5 632.5V881.5"/>
</g>
<g fill="#5470c6">
<rect x="355.83" y="756.50" width="7.3" height="124.50"/>
<rect x="366.77" y="756.50" width="7.3" height="124.50"/>
<rect x="377.72" y="756.50" width="7.3" height="124.50"/>
<rect x="388.66" y="756.50" width="7.3" height="124.50"/>
<rect x="399.61" y="756.50" width="7.3" height="124.50"/>
<rect x="410.55" y="756.50" width="7.3" height="124.50"/>
<rect x="421.50" y="756.50" width="7.3" height="48.97"/>
<rect x="607.56" y="632.00" width="7.3" height="124.50"/>
<rect x="618.51" y="632.00" width="7.3" height="124.50"/>
<rect x="629.45" y="632.00" width="7.3" height="124.50"/>
<rect x="651.34" y="632.00" width="7.3" height="124.50"/>
<rect x="662.29" y="632.00" width="7.3" height="124.50"/>
<rect x="673.23" y="654.62" width="7.3" height="101.88"/>
<rect x="684.18" y="734.50" width="7.3" height="22.00"/>
<rect x="727.96" y="705.66" width="7.3" height="50.84"/>
<rect x="771.74" y="756.50" width="7.3" height="49.18"/>
<rect x="804.57" y="756.50" width="7.3" height="124.50"/>
<rect x="848.35" y="756.50" width="7.3" height="124.50"/>
<rect x="859.30" y="756.50" width="7.3" height="124.50"/>
<rect x="870.24" y="756.50" width="7.3" height="124.50"/>
<rect x="892.13" y="756.50" width="7.3" height="124.50"/>
<rect x="946.86" y="756.50" width="7.3" height="124.50"/>
<rect x="1056.31" y="706.08" width="7.3" height="50.42"/>
<rect x="1100.09" y="632.00" width="7.3" height="124.50"/>
<rect x="1111.03" y="632.00" width="7.3" height="124.50"/>
<rect x="1132.92" y="632.00" width="7.3" height="124.50"/>
<rect x="1143.87" y="632.00" width="7.3" height="124.50"/>
<rect x="1154.81" y="632.00" width="7.3" height="124.50"/>
<rect x="1165.76" y="632.00" width="7.3" height="124.50"/>
</g>
<g stroke="#222" stroke-width="1" fill="none">
<path d="M255.50 756.5H1306.22"/>
<path d="M255.5 756.5V762.0"/>
<path d="M364.5 756.5V762.0"/>
<path d="M474.5 756.5V762.0"/>
<path d="M583.5 756.5V762.0"/>
<path d="M693.5 756.5V762.0"/>
<path d="M802.5 756.5V762.0"/>
<path d="M912.5 756.5V762.0"/>
<path d="M1021.5 756.5V762.0"/>
<path d="M1131.5 756.5V762.0"/>
<path d="M1240.5 756.5V762.0"/>
<path d="M1306.5 756.5V762.0"/>
</g>
<g fill="#333" text-anchor="end">
<text x="247.5" y="635.2">60</text>
<text x="247.5" y="676.2">40</text>
<text x="247.5" y="718.2">20</text>
<text x="247.5" y="759.2">0</text>
<text x="247.5" y="801.2">-20</text>
<text x="247.5" y="842.2">-40</text>
<text x="247.5" y="884.2">-60</text>
</g>
<g fill="#333">
<text x="1314.3" y="635.2">1.2</text>
<text x="1314.3" y="676.2">1</text>
<text x="1314.3" y="718.2">0.8</text>
<text x="1314.3" y="759.2">0.6</text>
<text x="1314.3" y="801.2">0.4</text>
<text x="1314.3" y="842.2">0.2</text>
<text x="1314.3" y="884.2">0</text>
</g>
<g fill="#333" text-anchor="middle" letter-spacing="0.120" font-size="14.500">
<text x="261.0" y="899.200">07-25 00:00</text>
<text x="370.4" y="899.200">07-25 02:30</text>
<text x="479.9" y="899.200">07-25 05:00</text>
<text x="589.3" y="899.200">07-25 07:30</text>
<text x="698.8" y="899.200">07-25 10:00</text>
<text x="808.2" y="899.200">07-25 12:30</text>
<text x="917.7" y="899.200">07-25 15:00</text>
<text x="1027.1" y="899.200">07-25 17:30</text>
<text x="1136.6" y="899.200">07-25 20:00</text>
<text x="1246.0" y="899.200">07-25 22:30</text>
</g>
<g font-size="12" fill="#333" text-anchor="middle"><text x="256" y="614.500">储能充放电功率</text><text x="1306.300" y="614.600">电价</text></g>
<path d="M260.97,822.60C260.97,822.60 266.45,822.60 271.92,822.60C277.39,822.60 277.39,822.60 282.86,822.60C288.34,822.60 288.34,822.60 293.81,822.60C299.28,822.60 299.28,822.60 304.75,822.60C310.23,822.60 310.23,822.60 315.70,822.60C321.17,822.60 321.17,822.60 326.64,822.60C332.12,822.60 332.12,822.60 337.59,822.60C343.06,822.60 343.06,822.60 348.53,822.60C354.00,822.60 354.00,822.60 359.48,822.60C364.95,822.60 364.95,822.60 370.42,822.60C375.89,822.60 375.89,822.60 381.37,822.60C386.84,822.60 386.84,822.60 392.31,822.60C397.78,822.60 397.78,822.60 403.26,822.60C408.73,822.60 408.73,822.60 414.20,822.60C419.67,822.60 419.68,822.60 425.15,822.60C430.62,822.60 430.62,822.60 436.09,822.60C441.56,822.60 441.57,822.60 447.04,822.60C452.51,822.60 452.51,822.60 457.98,822.60C463.46,822.60 463.46,822.60 468.93,822.60C474.40,822.60 474.40,822.60 479.87,822.60C485.35,822.60 485.35,822.60 490.82,822.60C496.29,822.60 496.29,822.60 501.76,822.60C507.24,822.60 507.24,822.60 512.71,822.60C518.18,822.60 518.18,822.60 523.65,822.60C529.12,822.60 529.12,822.60 534.60,822.60C540.07,822.60 540.07,822.60 545.54,822.60C551.01,822.60 551.02,822.60 556.49,822.60C561.96,822.60 561.96,822.60 567.43,822.60C572.90,822.60 572.90,822.60 578.38,822.60C583.85,822.60 583.85,822.60 589.32,822.60C594.79,822.60 599.63,822.60 600.27,822.60C610.57,822.60 600.91,646.10 611.21,646.10C611.85,646.10 616.69,646.10 622.16,646.10C627.63,646.10 627.63,646.10 633.10,646.10C638.57,646.10 638.58,646.10 644.05,646.10C649.52,646.10 649.52,646.10 654.99,646.10C660.47,646.10 660.47,646.10 665.94,646.10C671.41,646.10 671.41,646.10 676.88,646.10C682.35,646.10 682.36,646.10 687.83,646.10C693.30,646.10 693.30,646.10 698.77,646.10C704.25,646.10 704.25,646.10 709.72,646.10C715.19,646.10 715.19,646.10 720.66,646.10C726.13,646.10 730.51,646.10 731.61,646.10C741.46,646.10 732.70,743.70 742.55,743.70C743.65,743.70 748.03,743.70 753.50,743.70C758.97,743.70 758.97,743.70 764.44,743.70C769.91,743.70 769.91,743.70 775.39,743.70C780.86,743.70 780.86,743.70 786.33,743.70C791.80,743.70 791.81,743.70 797.28,743.70C802.75,743.70 802.75,743.70 808.22,743.70C813.69,743.70 813.69,743.70 819.17,743.70C824.64,743.70 824.64,743.70 830.11,743.70C835.59,743.70 835.59,743.70 841.06,743.70C846.53,743.70 846.53,743.70 852.00,743.70C857.48,743.70 857.48,743.70 862.95,743.70C868.42,743.70 868.42,743.70 873.89,743.70C879.37,743.70 879.37,743.70 884.84,743.70C890.31,743.70 890.31,743.70 895.78,743.70C901.26,743.70 901.26,743.70 906.73,743.70C912.20,743.70 912.20,743.70 917.67,743.70C923.14,743.70 923.14,743.70 928.62,743.70C934.09,743.70 934.09,743.70 939.56,743.70C945.03,743.70 945.04,743.70 950.51,743.70C955.98,743.70 955.98,743.70 961.45,743.70C966.92,743.70 966.92,743.70 972.40,743.70C977.87,743.70 977.87,743.70 983.34,743.70C988.81,743.70 993.19,743.70 994.29,743.70C1004.14,743.70 995.38,646.10 1005.23,646.10C1006.33,646.10 1010.71,646.10 1016.18,646.10C1021.65,646.10 1021.65,646.10 1027.12,646.10C1032.60,646.10 1032.60,646.10 1038.07,646.10C1043.54,646.10 1043.54,646.10 1049.01,646.10C1054.49,646.10 1054.49,646.10 1059.96,646.10C1065.43,646.10 1065.43,646.10 1070.90,646.10C1076.38,646.10 1076.38,646.10 1081.85,646.10C1087.32,646.10 1087.32,646.10 1092.79,646.10C1098.27,646.10 1098.27,646.10 1103.74,646.10C1109.21,646.10 1109.21,646.10 1114.68,646.10C1120.15,646.10 1120.16,646.10 1125.63,646.10C1131.10,646.10 1131.10,646.10 1136.57,646.10C1142.05,646.10 1142.05,646.10 1147.52,646.10C1152.99,646.10 1152.99,646.10 1158.46,646.10C1163.93,646.10 1163.93,646.10 1169.41,646.10C1174.88,646.10 1174.88,646.10 1180.35,646.10C1185.82,646.10 1185.83,646.10 1191.30,646.10C1196.77,646.10 1196.77,646.10 1202.24,646.10C1207.72,646.10 1212.09,646.10 1213.19,646.10C1223.04,646.10 1214.28,743.70 1224.13,743.70C1225.23,743.70 1229.61,743.70 1235.08,743.70C1240.55,743.70 1240.55,743.70 1246.02,743.70C1251.49,743.70 1251.49,743.70 1256.97,743.70C1262.44,743.70 1262.44,743.70 1267.91,743.70C1273.38,743.70 1273.39,743.70 1278.86,743.70C1284.33,743.70 1284.33,743.70 1289.80,743.70C1295.28,743.70 1300.75,743.70 1300.75,743.70" fill="none" stroke="#91cc75" stroke-width="2" stroke-linejoin="bevel"/>
<g font-size="12"><rect x="1168.3" y="587.3" width="24.5" height="13.600" rx="3" fill="#5470c6"/><text x="1198.2" y="597.6" fill="#333">储能充放电功率</text>
<path d="M1293 593.900H1318" stroke="#91cc75" stroke-width="2"/><circle cx="1305.300" cy="593.900" r="5.700" fill="#91cc75"/><text x="1323.2" y="597.6" fill="#333">电价</text></g>
</svg></div>
<div class="right">
<div class="ct" style="left:30px;top:7.5px">经济优化调度</div>
<div class="st" style="left:25px;top:46px;width:213px;height:176px;background:linear-gradient(180deg,#e8eefd 0%,#f4f7ff 62%,#f7f9ff 100%)"><div class="num" style="left:18.3px;top:38.7px">1963.42</div><div class="lab" style="left:19.5px;top:117.5px">原电费账单（元）</div></div>
<div class="st" style="left:262px;top:46px;width:213px;height:176px;background:linear-gradient(180deg,#dff7f8 0%,#f0fcfd 62%,#f5fdff 100%)"><div class="num" style="left:18.3px;top:38.7px">1835.06</div><div class="lab" style="left:19.5px;top:117.5px">现电费账单（元）</div></div>
<div class="st" style="left:25px;top:243px;width:213px;height:176px;background:linear-gradient(180deg,#dbf8df 0%,#f5fdf0 62%,#fcfff5 100%)"><svg class="abs" style="left:0;top:0" width="213" height="60" viewBox="0 0 213 60"><defs><linearGradient id="shg" x1="0" y1="0" x2="0" y2="1"><stop offset="0" stop-color="#fff" stop-opacity=".38"/><stop offset="1" stop-color="#fff" stop-opacity="0"/></linearGradient></defs><path d="M170.600 0H182.500L150 48H143.500Z" fill="url(#shg)"/><path d="M192.400 0H204.300L174.500 42H169Z" fill="url(#shg)"/></svg><div class="num" style="left:18.3px;top:38.7px">0.47</div><div class="lab" style="left:19.5px;top:117.5px">原度电成本（元/kWh）</div></div>
<div class="st" style="left:262px;top:243px;width:213px;height:176px;background:linear-gradient(180deg,#fdeee0 0%,#fff9ef 62%,#fffcf3 100%)"><div class="num" style="left:18.3px;top:38.7px">0.44</div><div class="lab" style="left:19.5px;top:117.5px">现度电成本（元/kWh）</div></div>
<div class="st" style="left:26px;top:440px;width:448.3px;height:176px;background:linear-gradient(180deg,#feebe7 0%,#fff6f3 62%,#fff9f7 100%)"><svg class="abs" style="left:342px;top:60px" width="110" height="116" viewBox="1740 590 110 116">
<g opacity="0.78">
<path d="M1757.500 636 C1750 639 1746.300 644 1746.300 648 L1746.300 655.500 L1752.500 661 L1752.500 653 C1752.500 648.500 1755 645 1759.500 642.500Z" fill="#fbd3dc" opacity=".7"/>
<path d="M1773.400 610 A25 25 0 0 0 1768 657" fill="none" stroke="#fbc9d5" stroke-width="1.400"/>
<path d="M1797 616 A25 25 0 0 1 1808.500 630" fill="none" stroke="#fbc9d5" stroke-width="1.400"/>
<path d="M1753 669.500 L1779 659 L1814 672 L1814 681 L1780 695 L1753 679Z" fill="#fbc5d2" opacity=".75"/>
<path d="M1753 669.500 L1779 659 L1814 672 L1780 686Z" fill="#fde3e8"/>
<ellipse cx="1781" cy="668" rx="11.500" ry="5.200" fill="#fbbfce"/>
<ellipse cx="1781" cy="667.300" rx="7" ry="3.100" fill="#fdd9e0"/>
<path d="M1780.600 638 L1788 638 L1788.600 667 C1786 669 1781.500 669 1779.500 667Z" fill="#fbb8c9"/>
<circle cx="1789.200" cy="630.800" r="4.800" fill="#f9a9be"/>
<path d="M1787 636 C1794 640 1800 645 1803 651 C1797 650 1790 645 1784 639Z" fill="#fbc1cf"/>
<path d="M1785 594.500 C1789 602 1790 618 1788 633 L1780.500 633 C1778.800 618 1781 602 1785 594.500Z" fill="#fab3c5"/>
<path d="M1781 631.500 C1772 635 1762 641.500 1755.500 647 C1755.800 651.500 1760 651.500 1764 650 C1772 647 1781 642.500 1786.500 638.500Z" fill="#fab3c5"/>
<circle cx="1783.400" cy="635" r="5.800" fill="#f9afc2"/>
</g></svg><div class="num" style="left:28.8px;top:41.8px">0</div><div class="lab" style="left:30px;top:115px">弃光率（%）</div></div>
<div class="st" style="left:26px;top:637px;width:448.3px;height:176px;background:linear-gradient(180deg,#e3f3fe 0%,#f0f8ff 62%,#f4faff 100%)"><svg class="abs" style="left:349.500px;top:71.500px" width="100" height="103" viewBox="1749 800 100 103">
<g opacity="0.8">
<path d="M1753 868 L1785 856 L1818 868 L1818 877 L1785 892 L1753 877Z" fill="#a6d3f9"/>
<path d="M1753 868 L1785 856 L1818 868 L1785 882Z" fill="#e9f4fe"/>
<path d="M1753 868 L1785 882 L1785 889 L1753 874.500Z" fill="#d6ebfd"/>
<ellipse cx="1783" cy="866" rx="12" ry="4.500" fill="#cfe6fc"/>
<rect x="1780" y="846" width="5.500" height="20" fill="#8fc5f6"/>
<path d="M1760 853 C1751 853 1749 843 1753 836 C1754 826 1763 823 1768 825 C1771 810 1788 804 1799 812 C1806 817 1808 824 1807 828 C1818 826 1829 833 1828 843 C1828 850 1822 853 1816 853Z" fill="#8ec5f7"/>
<path d="M1757 853 C1748 853 1746 843 1750 836 C1751 826 1760 823 1765 825 C1768 810 1785 804 1796 812 C1803 817 1805 824 1804 828 C1815 826 1826 833 1825 843 C1825 850 1819 853 1813 853Z" fill="#d5e9fc" stroke="#9bcbf8" stroke-width="1.200"/>
<rect x="1767" y="824" width="30" height="24" rx="2.500" fill="#c3dffb" stroke="#86bff5" stroke-width="1.500"/>
<path d="M1782 824 V848" stroke="#86bff5" stroke-width="1.500"/>
</g></svg><div class="num" style="left:28.8px;top:41.8px">0</div><div class="lab" style="left:30px;top:115px">弃风率（%）</div></div>
<div class="abs" style="left:459px;top:623px;width:16px;height:25px;background:#fff;border-radius:5px 0 0 5px"></div>
<svg class="abs" style="left:465px;top:628px" width="14" height="14" viewBox="0 0 14 14"><g stroke="#111" stroke-width="1.300" fill="none"><path d="M0.500 2.300H13.500M0.500 7H13.500M0.500 11.700H13.500"/></g><g fill="#111"><circle cx="5" cy="2.300" r="1.700"/><circle cx="9.300" cy="7" r="1.700"/><circle cx="5.600" cy="11.700" r="1.700"/></g></svg>
<div class="abs" style="left:419px;top:537px;width:66px;height:66px;border-radius:50%;background:#fff;box-shadow:0 0 7px 1px rgba(90,225,235,.85)"></div>
<div class="abs" style="left:422px;top:540px;width:60px;height:60px;border-radius:50%;background:linear-gradient(135deg,#ece23a 0%,#86cd62 20%,#2eb4ae 48%,#3a93e2 80%,#6a78ee 100%)"></div>
<div class="abs" style="left:430px;top:550px;width:44px;text-align:center;font-size:29px;line-height:34px;font-weight:bold;font-style:italic;color:#fff;letter-spacing:1px;transform:scaleX(1.180)">AI</div>
<div class="abs" style="left:410px;top:586px;width:85px;height:20px;border-radius:10px;background:linear-gradient(90deg,#58d3c6,#3fb4dc);box-shadow:0 0 4px rgba(90,225,235,.7);color:#fff;font-size:14px;line-height:19px;text-align:center;letter-spacing:.55px;text-indent:1px">deepseek</div>
<div class="abs wm" style="left:315px;top:742.5px;width:134px;height:14px;border:1px solid rgba(150,150,150,.55);border-top-color:rgba(255,255,255,.8);border-left-color:rgba(255,255,255,.8);font-size:10.700px;line-height:14px;font-weight:bold;text-align:center;color:rgba(255,255,255,.85);text-shadow:.7px .7px .4px rgba(110,110,110,.6);white-space:nowrap;letter-spacing:0">深度关注新能源经济与资本</div>
<div class="abs wm" style="left:267px;top:757px;width:236px;font-family:'Liberation Serif','Noto Serif CJK SC',serif;font-size:38.2px;line-height:50px;font-weight:400;color:rgba(255,255,255,.9);text-shadow:.8px .8px .6px rgba(105,105,105,.62);white-space:nowrap;letter-spacing:-0.300px">世纪新能源网</div>
<div class="abs wm" style="left:303.5px;top:800px;width:152px;font-family:'Liberation Serif',serif;font-size:11.900px;line-height:15px;font-weight:bold;color:rgba(255,255,255,.88);text-shadow:.7px .7px .6px rgba(115,115,115,.65);white-space:nowrap;text-align:center">Century new energy network</div>
</div>
</div>
</body>
</html>
